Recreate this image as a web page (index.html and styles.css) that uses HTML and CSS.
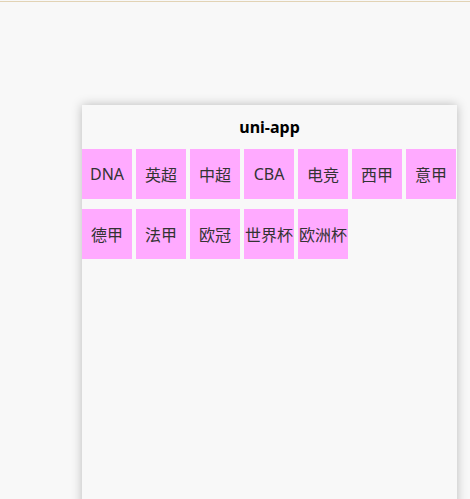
FILE: index.html
```html
<!DOCTYPE html>
<html lang="zh">
<head>
<meta charset="utf-8">
<title>uni-app</title>
<link rel="stylesheet" href="styles.css">
</head>
<body>
<div class="topline"></div>
<div class="stage">
  <div class="phone">
    <div class="navbar">uni-app</div>
    <div class="tags">
      <div class="tag">DNA</div>
      <div class="tag">英超</div>
      <div class="tag">中超</div>
      <div class="tag">CBA</div>
      <div class="tag">电竞</div>
      <div class="tag">西甲</div>
      <div class="tag">意甲</div>
      <div class="tag">德甲</div>
      <div class="tag">法甲</div>
      <div class="tag">欧冠</div>
      <div class="tag">世界杯</div>
      <div class="tag">欧洲杯</div>
    </div>
  </div>
</div>
</body>
</html>
```

FILE: styles.css
```css
html, body {
  margin: 0;
  padding: 0;
  background: #f8f8f8;
  overflow: hidden;
  height: 100%;
}
body {
  font-family: "Noto Sans", "Noto Sans CJK SC", sans-serif;
}
.topline {
  height: 1px;
  margin-top: 1px;
  background: #e2d3b5;
}
.stage {
  padding: 103px 0 0 82px;
}
.phone {
  width: 375px;
  height: 667px;
  background: #f8f8f8;
  box-shadow: 0 0 10px rgba(0, 0, 0, 0.25);
}
.navbar {
  height: 44px;
  display: flex;
  align-items: center;
  justify-content: center;
  font-size: 16px;
  font-weight: bold;
  color: #000;
}
.tags {
  display: flex;
  flex-wrap: wrap;
  column-gap: 4px;
  row-gap: 10px;
}
.tag {
  width: 50px;
  height: 50px;
  background: #ffaaff;
  color: #333;
  font-size: 16px;
  display: flex;
  align-items: center;
  justify-content: center;
  white-space: nowrap;
}
```
